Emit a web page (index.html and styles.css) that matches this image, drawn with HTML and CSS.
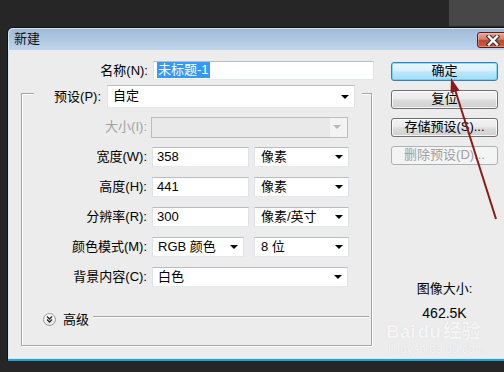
FILE: index.html
```html
<!DOCTYPE html>
<html lang="zh-CN">
<head>
<meta charset="utf-8">
<title>新建</title>
<link rel="stylesheet" href="styles.css">
</head>
<body>
<div class="bgwin"></div>
<div class="dialog">
  <div class="titlebar">
    <span class="title">新建</span>
    <div class="close">
      <svg width="14" height="11" viewBox="0 0 14 11"><path d="M3 1.5 L11 9.5 M11 1.5 L3 9.5" stroke="#3a3a3a" stroke-width="4.6" stroke-linecap="square"/><path d="M3 1.5 L11 9.5 M11 1.5 L3 9.5" stroke="#fff" stroke-width="2.4" stroke-linecap="square"/></svg>
    </div>
  </div>
  <div class="client">
    <div class="form">
      <div class="name-row">
        <span class="lbl name-lbl">名称(N):</span>
        <div class="input name-input"><span class="sel">未标题-1</span></div>
      </div>
      <div class="group">
        <div class="group-head">
          <span class="lbl head-lbl">预设(P):</span>
          <div class="select preset">自定</div>
        </div>
        <div class="rows">
          <div class="row">
            <span class="lbl disabled">大小(I):</span>
            <div class="select dis-select"></div>
          </div>
          <div class="row">
            <span class="lbl">宽度(W):</span>
            <div class="input w-num">358</div>
            <div class="select w-unit">像素</div>
          </div>
          <div class="row">
            <span class="lbl">高度(H):</span>
            <div class="input w-num">441</div>
            <div class="select w-unit">像素</div>
          </div>
          <div class="row">
            <span class="lbl">分辨率(R):</span>
            <div class="input w-num">300</div>
            <div class="select w-unit">像素/英寸</div>
          </div>
          <div class="row">
            <span class="lbl">颜色模式(M):</span>
            <div class="select w-mode">RGB 颜色</div>
            <div class="select w-unit w-bits">8 位</div>
          </div>
          <div class="row">
            <span class="lbl">背景内容(C):</span>
            <div class="select w-bg">白色</div>
          </div>
        </div>
        <div class="adv">
          <span class="adv-btn"><svg width="11" height="11" viewBox="0 0 11 11"><path d="M3 2.5 L5.5 5 L8 2.5 M3 5.5 L5.5 8 L8 5.5" fill="none" stroke="#222" stroke-width="1.3"/></svg></span>
          <span class="adv-text">高级</span>
          <span class="adv-line"></span>
        </div>
      </div>
    </div>
    <div class="side">
      <div class="btn default">确定</div>
      <div class="btn">复位</div>
      <div class="btn">存储预设(S)...</div>
      <div class="btn off">删除预设(D)...</div>
      <div class="info">
        <div class="info-lbl">图像大小:</div>
        <div class="info-val">462.5K</div>
      </div>
    </div>
  </div>
  <div class="frame-bot"></div>
</div>
<div class="watermark">
  <div class="wm-main">Bai<span class="wm-du">du</span>经验</div>
  <div class="wm-sub">jingyan.baidu.com</div>
</div>
<svg class="pointer" width="504" height="372" viewBox="0 0 504 372">
  <line x1="496" y1="219" x2="454.5" y2="88" stroke="#8a1b1b" stroke-width="2"/>
  <polygon points="451,78 459.5,90.5 450.5,93" fill="#8a1b1b"/>
</svg>
</body>
</html>
```

FILE: styles.css
```css
html, body {
  margin: 0;
}
body {
  width: 504px;
  height: 372px;
  overflow: hidden;
  box-sizing: border-box;
  padding: 27px 0 0 7px;
  background: #262626;
  font-family: "Liberation Sans", "Noto Sans CJK SC", sans-serif;
  font-size: 13px;
  line-height: 16px;
  color: #000;
}
.bgwin {
  position: absolute;
  left: 449px;
  top: 0;
  width: 55px;
  height: 26px;
  background: #474747;
}
.dialog {
  width: 505px;
  border: 1px solid #141414;
  border-bottom: none;
  border-radius: 6px 6px 0 0;
}
.titlebar {
  height: 22px;
  display: flex;
  background: linear-gradient(#9fb9d6, #bed5ec);
  border-radius: 5px 5px 0 0;
  box-shadow: inset 1px 1px 0 rgba(255, 255, 255, 0.55);
}
.title {
  padding: 3px 0 0 6px;
  font-size: 13px;
  line-height: 16px;
  color: #111;
}
.close {
  margin: 4px 5px 0 auto;
  width: 31px;
  height: 16px;
  box-sizing: border-box;
  border: 1px solid #5e1c14;
  border-radius: 3px;
  background: linear-gradient(#e6a89a, #d47e6a 45%, #c1462f 52%, #cb5d3d);
  box-shadow: inset 0 0 0 1px rgba(255, 220, 210, 0.35);
  display: flex;
  align-items: center;
  justify-content: center;
}
.client {
  display: flex;
  height: 308px;
  background: #ececec;
  border-left: 1px solid #d8e6f2;
}
.frame-bot {
  height: 2px;
  background: #1fa3d6;
  border-top: 1px solid #d3e6f2;
}
.form {
  width: 365px;
  flex: none;
}
.lbl {
  flex: none;
  text-align: right;
  white-space: nowrap;
}
.disabled {
  color: #a2a2a2;
}
.name-row {
  display: flex;
  align-items: center;
  margin-top: 11px;
}
.name-lbl {
  width: 139px;
  margin-right: 5px;
}
.input, .select {
  box-sizing: border-box;
  height: 20px;
  background: #fff;
  border: 1px solid;
  border-color: #b9bcc3 #dde2e8 #e3e9ef #dfe3e9;
  line-height: 17px;
  white-space: nowrap;
}
.input {
  padding-left: 4px;
}
.name-input {
  width: 221px;
  height: 19px;
  padding-left: 3px;
  line-height: 16px;
}
.sel {
  background: #3399ff;
  color: #fff;
  padding: 0 1px 1px;
}
.group {
  box-sizing: border-box;
  margin: 13px 0 0 12px;
  width: 351px;
  height: 253px;
  border: 1px solid #a6a6a6;
  box-shadow: inset 1px 1px 0 #fff, 1px 1px 0 #fff;
}
.group-head {
  display: flex;
  align-items: center;
  box-sizing: border-box;
  margin: -9px 0 0 12px;
  width: 328px;
  height: 23px;
  padding-right: 7px;
  background: #ececec;
}
.head-lbl {
  width: 67px;
  margin-right: 6px;
}
.select {
  position: relative;
  padding-left: 5px;
}
.select::after {
  content: "";
  position: absolute;
  right: 5px;
  top: 50%;
  margin-top: -2px;
  border-left: 4px solid transparent;
  border-right: 4px solid transparent;
  border-top: 4px solid #000;
}
.preset {
  width: 248px;
  height: 23px;
  line-height: 20px;
  padding-left: 5px;
}
.rows {
  display: flex;
  flex-direction: column;
  gap: 10px;
  padding-top: 9px;
}
.row {
  display: flex;
  align-items: center;
  height: 20px;
}
.row .lbl {
  width: 125px;
  margin-right: 5px;
}
.dis-select {
  width: 197px;
  height: 21px;
  margin-left: -1px;
  background: linear-gradient(to right, #e9e9e9 0, #e9e9e9 178px, #f3f3f3 178px);
  border-color: #bdbdbd;
}
.dis-select::after {
  border-top-color: #b8b8b8;
  right: 6px;
}
.w-num {
  width: 97px;
}
.w-unit {
  width: 95px;
  margin-left: 5px;
  padding-left: 6px;
}
.w-mode {
  width: 92px;
}
.w-bits {
  margin-left: 10px;
}
.w-bg {
  width: 196px;
}
.adv {
  display: flex;
  align-items: flex-start;
  margin: 26px 0 0 21px;
  height: 14px;
}
.adv-btn {
  box-sizing: border-box;
  width: 13px;
  height: 13px;
  border-radius: 50%;
  border: 1px solid #9c9c9c;
  background: radial-gradient(circle at 50% 35%, #ffffff 0, #f4f4f4 45%, #d6d6d6 100%);
  display: flex;
  align-items: center;
  justify-content: center;
}
.adv-text {
  margin-left: 7px;
  line-height: 14px;
}
.adv-line {
  flex: 1;
  height: 0;
  margin: 3px 2px 0 4px;
  border-top: 1px solid #a6a6a6;
  border-bottom: 1px solid #fff;
}
.side {
  width: 107px;
  padding-left: 17px;
  display: flex;
  flex-direction: column;
}
.btn {
  box-sizing: border-box;
  width: 107px;
  height: 19px;
  margin-top: 9px;
  border: 1px solid #707070;
  border-radius: 3px;
  background: linear-gradient(#f3f3f3, #ebebeb 45%, #dddddd 52%, #d0d0d0);
  box-shadow: inset 0 0 0 1px rgba(255, 255, 255, 0.75);
  text-align: center;
  line-height: 16px;
  white-space: nowrap;
}
.btn.default {
  margin-top: 12px;
  border-color: #3c7fb1;
  background: linear-gradient(#eaf6fd, #d9f0fc 45%, #bee6fd 52%, #a7d9f5);
  box-shadow: inset 0 0 0 1px rgba(60, 200, 245, 0.55);
}
.btn.off {
  border-color: #adb2b5;
  background: #f4f4f4;
  color: #a0a0a0;
  box-shadow: none;
}
.info {
  margin-top: 116px;
  text-align: center;
}
.info-lbl {
  line-height: 16px;
}
.info-val {
  margin-top: 8px;
  line-height: 16px;
  font-size: 14px;
}
.watermark {
  position: absolute;
  left: 386px;
  top: 322px;
  color: #f5f5f5;
  text-shadow: 0 0 1px rgba(0, 0, 0, 0.12);
  font-family: "Liberation Sans", "Noto Sans CJK SC", sans-serif;
}
.wm-main {
  font-size: 19px;
  line-height: 20px;
  font-weight: bold;
}
.wm-du {
  margin: 0 2px;
}
.wm-sub {
  font-size: 12px;
  line-height: 14px;
  padding-left: 2px;
}
.pointer {
  position: absolute;
  left: 0;
  top: 0;
}
```
